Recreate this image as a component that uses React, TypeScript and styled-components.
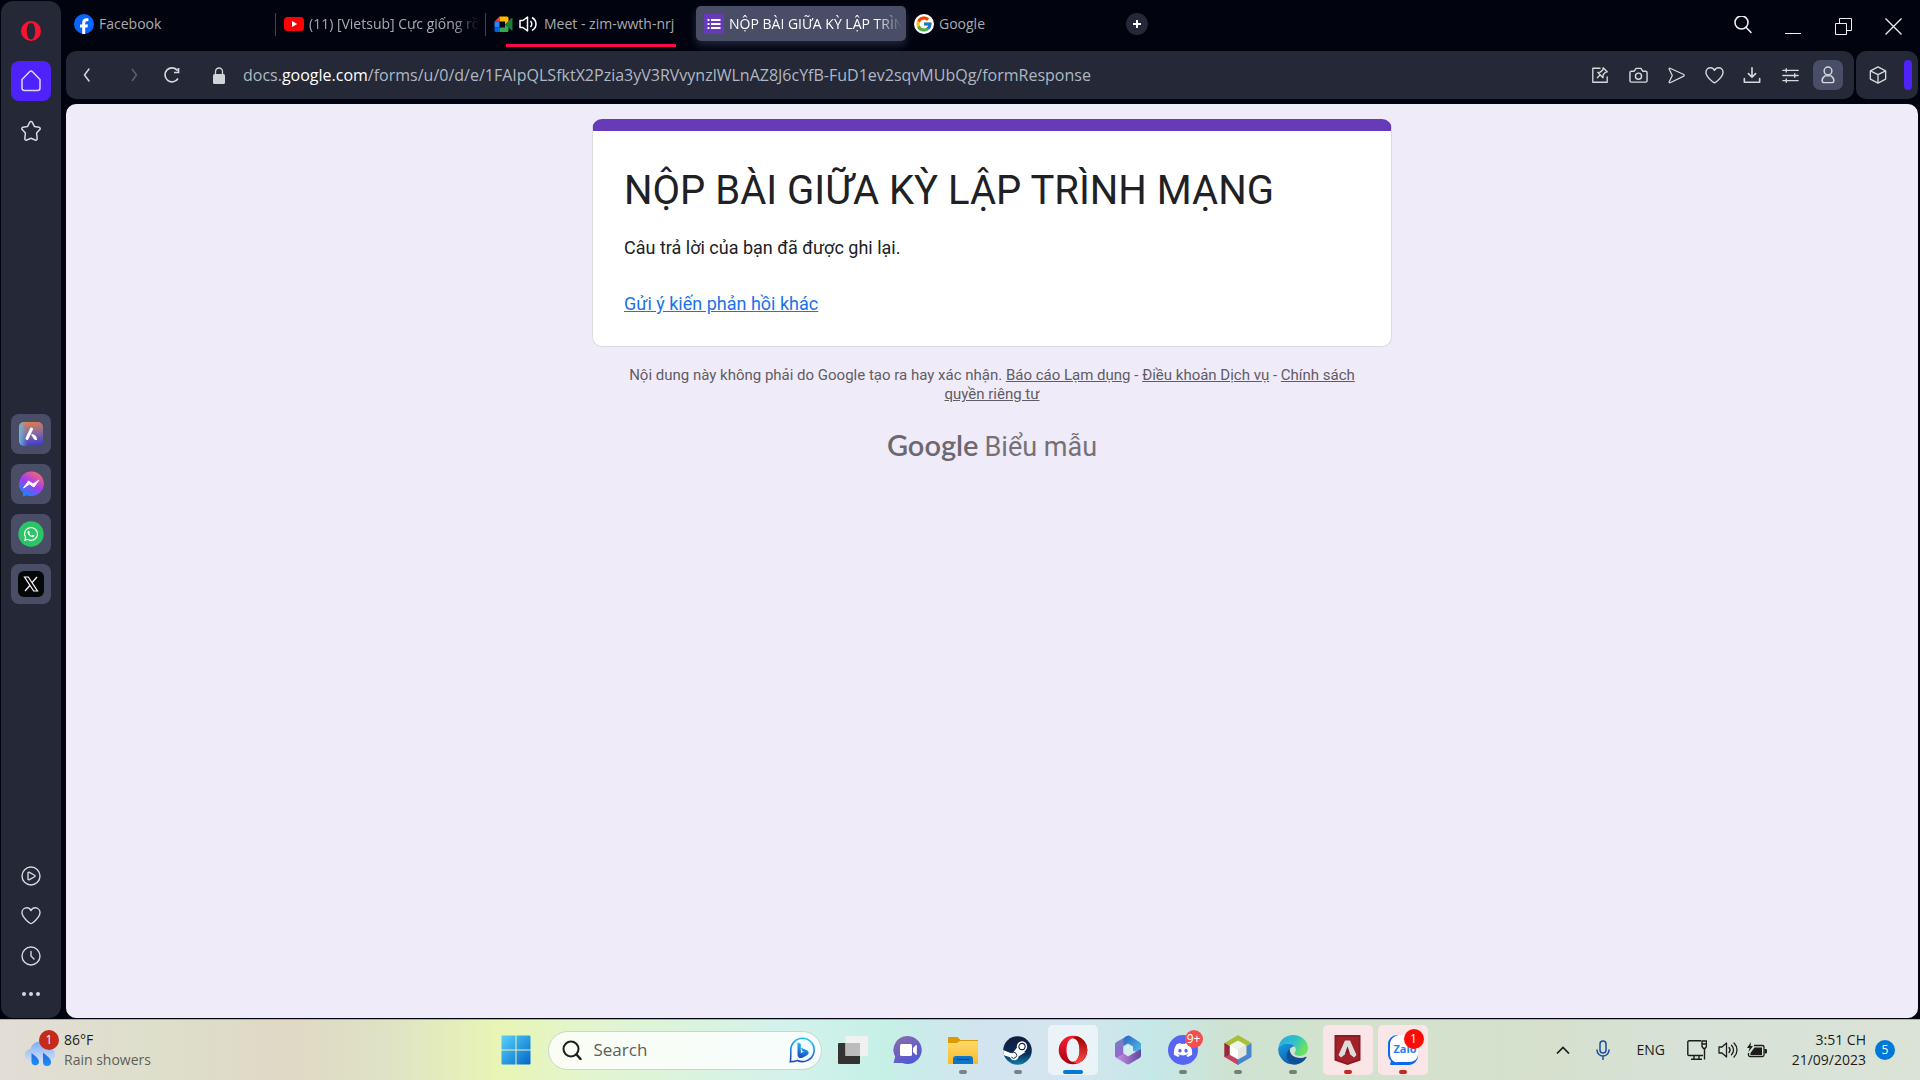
import React from "react";
import styled, { createGlobalStyle, css } from "styled-components";
import { FcGoogle } from "react-icons/fc";
import { FaDiscord, FaWhatsapp } from "react-icons/fa";

const Global = createGlobalStyle`
  *, *::before, *::after { box-sizing: border-box; }
  body { margin: 0; background: #01030f; font-family: "Open Sans", "Noto Sans", sans-serif; }
  button { font: inherit; color: inherit; border: 0; padding: 0; background: none; cursor: pointer; }
  svg { display: block; flex: none; }
`;

const Screen = styled.div`
  height: 100vh;
  display: grid;
  grid-template-rows: minmax(0, 1fr) 61px;
  background: #01030f;
`;

const Browser = styled.div`
  display: grid;
  grid-template-columns: 60px minmax(0, 1fr);
  gap: 5px;
  padding: 1px 2px 1px 1px;
  min-height: 0;
`;

const Sidebar = styled.nav`
  display: flex;
  flex-direction: column;
  align-items: center;
  background: #252836;
  border-radius: 12px;
  color: #d5d8e0;
  padding: 10px 0 2px;
`;

const SideButton = styled.button<{ $bg?: string }>`
  width: 40px;
  height: 40px;
  border-radius: 8px;
  background: ${(p) => p.$bg || "transparent"};
  display: grid;
  place-items: center;
`;

const SideGroup = styled.div<{ $gap: number }>`
  display: flex;
  flex-direction: column;
  gap: ${(p) => p.$gap}px;
`;

const Spacer = styled.div<{ $grow: number }>`
  flex: ${(p) => p.$grow} 1 0;
`;

const Main = styled.div`
  display: grid;
  grid-template-rows: 50px 48px minmax(0, 1fr);
  min-height: 0;
`;

const TopBar = styled.header`
  display: flex;
  justify-content: space-between;
  padding-top: 5px;
`;

const Tabs = styled.div`
  display: flex;
  align-items: flex-start;
`;

const Tab = styled.button<{ $active?: boolean; $line?: boolean }>`
  position: relative;
  width: 210px;
  height: 35px;
  display: flex;
  align-items: center;
  gap: 5px;
  padding: 0 8px;
  font-size: 14px;
  color: #a9abb0;
  border-radius: 5px;
  text-align: left;
  ${(p) =>
    p.$active &&
    css`
      background: #4a4d66;
      color: #fff;
      box-shadow: 0 4px 8px rgba(120, 124, 160, 0.3);
      padding-right: 5px;
    `}
  ${(p) =>
    p.$line &&
    css`
      &::before {
        content: "";
        position: absolute;
        left: -1px;
        top: 7px;
        width: 1px;
        height: 23px;
        background: #3f4357;
      }
    `}
`;

const TabLabel = styled.span<{ $fade?: boolean }>`
  flex: 1;
  min-width: 0;
  overflow: hidden;
  white-space: nowrap;
  ${(p) => p.$fade && "mask-image: linear-gradient(90deg, #000 85%, transparent 101%);"}
`;

const Playing = styled.span`
  position: absolute;
  left: 20px;
  right: 20px;
  bottom: -6px;
  height: 3px;
  background: #fa0a4c;
`;

const NewTab = styled.button`
  width: 22px;
  height: 22px;
  border-radius: 50%;
  background: #252836;
  display: grid;
  place-items: center;
  margin: 7px 10px;
`;

const WindowControls = styled.div`
  display: flex;
  align-items: flex-start;
  color: #eceef2;
`;

const WinButton = styled.button`
  width: 50px;
  height: 40px;
  display: grid;
  place-items: center;
`;

const AddressRow = styled.div`
  display: flex;
  gap: 2px;
`;

const Panel = styled.div<{ $grow?: boolean }>`
  display: flex;
  align-items: center;
  background: #252836;
  border-radius: 10px;
  color: #d5d8dd;
  min-width: 0;
  ${(p) =>
    p.$grow
      ? "flex: 1; padding: 0 11px 0 2px;"
      : "width: 62px; padding: 0 6px 0 7px; justify-content: space-between;"}
`;

const ToolButton = styled.button<{ $w?: number; $on?: boolean }>`
  flex: none;
  width: ${(p) => p.$w || 30}px;
  height: 30px;
  border-radius: 7px;
  display: grid;
  place-items: center;
  background: ${(p) => (p.$on ? "#4a4d66" : "transparent")};
`;

const Navigation = styled.div`
  display: flex;
  align-items: center;
  margin-right: 12px;
`;

const Url = styled.div`
  flex: 1;
  min-width: 0;
  overflow: hidden;
  white-space: nowrap;
  outline: 0;
  font-size: 16px;
  line-height: 24px;
  color: #aeb8c4;
  b { font-weight: 400; color: #fff; }
`;

const Tools = styled.div`
  display: flex;
  align-items: center;
  gap: 8px;
`;

const Accent = styled.span`
  width: 8px;
  height: 30px;
  border-radius: 4px;
  background: #4d22fb;
`;

const Page = styled.main`
  margin-top: 5px;
  background: #f0ebf8;
  border-radius: 10px;
  overflow: auto;
  padding-top: 15px;
  display: flex;
  flex-direction: column;
  align-items: center;
  font-family: Roboto, sans-serif;
`;

const Card = styled.section`
  width: 100%;
  max-width: 800px;
  background: #fff;
  border: 1px solid #dadce0;
  border-top: 12px solid #673ab7;
  border-radius: 10px;
  padding: 35px 31px 29px;
  color: #202124;
`;

const Title = styled.h1`
  margin: 0 0 18px;
  font-size: 40px;
  line-height: 50px;
  font-weight: 400;
`;

const Message = styled.p`
  margin: 0 0 29px;
  font-size: 18px;
  line-height: 27px;
`;

const Another = styled.a`
  display: block;
  font-size: 18px;
  line-height: 27px;
  color: #1a73e8;
  text-decoration: underline;
`;

const Legal = styled.p`
  width: 100%;
  max-width: 741px;
  margin: 19px 0 23px;
  font-size: 15px;
  line-height: 19px;
  text-align: center;
  color: #5f5c65;
  a { color: inherit; }
`;

const Brand = styled.a`
  display: flex;
  align-items: baseline;
  gap: 6px;
  font-size: 27px;
  line-height: 36px;
  color: #747179;
  text-decoration: none;
  b { font-family: Lato, sans-serif; font-size: 29px; font-weight: 600; color: #6b6870; }
`;

const Taskbar = styled.footer`
  display: grid;
  grid-template-columns: minmax(0, 1fr) auto minmax(0, 1fr);
  align-items: center;
  border-top: 1px solid #aab09f;
  color: #1c1d1b;
  background: linear-gradient(90deg, #e2ddd6 0%, #dedfcb 8%, #dfd9c6 15%, #dfe2c5 20%, #e8f5b5 26%, #e2f5d0 31%, #d3f2ec 41%, #c6f0e6 46%, #d2e4ef 51%, #d4e5ef 56%, #c5e8e8 60%, #cfe2d2 64%, #d3e2cc 71%, #d6e0cc 80%, #d7e2d8 88%, #dbe3d6 100%);
`;

const Weather = styled.button`
  display: flex;
  align-items: center;
  gap: 8px;
  padding-left: 24px;
  text-align: left;
  font-size: 14px;
  line-height: 20px;
  justify-self: start;
`;

const Muted = styled.span`
  display: block;
  color: #5c5f56;
`;

const Center = styled.div`
  display: flex;
  align-items: center;
  gap: 5px;
  margin-right: 2px;
`;

const Search = styled.label`
  width: 274px;
  height: 39px;
  display: flex;
  align-items: center;
  border: 1px solid #c9d6cb;
  border-radius: 20px;
  background: rgba(255, 255, 255, 0.8);
  padding: 0 6px 0 13px;
  margin: 0 1px 0 2px;
  input {
    flex: 1;
    min-width: 0;
    margin-left: 12px;
    border: 0;
    outline: 0;
    padding: 0;
    background: none;
    font: 17px/24px "Open Sans", sans-serif;
    color: #555;
  }
  input::placeholder { color: #5b5e59; opacity: 1; }
`;

const AppButton = styled.button<{ $bg?: string }>`
  position: relative;
  width: 50px;
  height: 50px;
  border-radius: 5px;
  display: grid;
  place-items: center;
  background: ${(p) => p.$bg || "transparent"};
`;

const Running = styled.span<{ $c: string; $w: number }>`
  position: absolute;
  left: 50%;
  bottom: 1px;
  width: ${(p) => p.$w}px;
  height: 4px;
  margin-left: ${(p) => -p.$w / 2}px;
  border-radius: 2px;
  background: ${(p) => p.$c};
`;

const Badge = styled.span<{ $c: string; $x: number; $y: number; $s: number }>`
  position: absolute;
  left: ${(p) => p.$x}px;
  top: ${(p) => p.$y}px;
  width: ${(p) => p.$s}px;
  height: ${(p) => p.$s}px;
  border-radius: 50%;
  background: ${(p) => p.$c};
  color: #fff;
  font-size: 12px;
  line-height: ${(p) => p.$s}px;
  text-align: center;
`;

const IconBox = styled.span`
  position: relative;
  display: block;
`;

const Tray = styled.div`
  justify-self: end;
  display: flex;
  align-items: center;
  padding-right: 25px;
  font-size: 14px;
  line-height: 20px;
`;

const TrayButton = styled.button<{ $w: number }>`
  width: ${(p) => p.$w}px;
  height: 40px;
  display: grid;
  place-items: center;
`;

const Clock = styled.button`
  text-align: right;
  margin: 0 9px 0 18px;
  line-height: 20px;
`;

const Count = styled.button`
  && {
    width: 20px;
    height: 20px;
    border-radius: 50%;
    background: #0078d7;
    color: #fff;
    font-size: 12px;
  }
`;

const Line = ({ s = 20, w = 1.5, children }: { s?: number; w?: number; children: React.ReactNode }) => (
  <svg width={s} height={s} viewBox="0 0 20 20" fill="none" stroke="currentColor" strokeWidth={w} strokeLinecap="round" strokeLinejoin="round">
    {children}
  </svg>
);

const HeartPath = <path d="M10 17.6C9 17.6 1 11.600 1 6.600 1 3.800 3.200 1.800 5.800 1.800 7.800 1.800 9.200 3 10 4.600 10.800 3 12.200 1.800 14.200 1.800c2.600 0 4.800 2 4.800 4.800 0 5-8 11-9 11z" />;

const FacebookIcon = () => (
  <svg width="20" height="20" viewBox="0 0 20 20">
    <circle cx="10" cy="10" r="10" fill="#0866ff" />
    <path fill="#fff" d="M8.2 20v-6.600H6v-3h2.200V9c0-3.200 1.500-4.700 4.600-4.700.6 0 1.200.1 1.600.2v2.800h-1.200c-1.500 0-2 .6-2 2.100v1H14l-.5 3h-2.300V20z" />
  </svg>
);

const YoutubeIcon = () => (
  <svg width="20" height="20" viewBox="0 0 20 20">
    <rect y="3" width="20" height="14" rx="3.5" fill="#f00" />
    <path d="M8 7v6l5.200-3z" fill="#fff" />
  </svg>
);

const MeetIcon = () => (
  <svg width="20" height="20" viewBox="0 0 20 20">
    <path d="M5.500 2.500v5H.5z" fill="#ea4335" />
    <path d="M.5 7.500h5v6h-5z" fill="#2684fc" />
    <path d="M.5 13.500h5v4.500h-3.500a1.500 1.500 0 0 1-1.500-1.500z" fill="#0066da" />
    <path d="M5.500 2.500h7.500a1.500 1.500 0 0 1 1.500 1.500v4l-3.500 2.500v-3h-5.500z" fill="#ffba00" />
    <path d="M11 10.500l3.500 2.500v3.500a1.500 1.500 0 0 1-1.500 1.500h-7.500v-4.500h5.500z" fill="#34a853" />
    <path d="M11 10.300l6.500-6c.6-.5 1-.3 1 .3v11.400c0 .6-.4.8-1 .3z" fill="#188038" />
  </svg>
);

const FormsIcon = () => (
  <svg width="20" height="20" viewBox="0 0 20 20">
    <rect width="20" height="20" rx="1" fill="#673ab7" />
    <path d="M3.500 5h2v2h-2zM7 5h9.500v2H7zM3.500 9h2v2h-2zM7 9h9.500v2H7zM3.500 13h2v2h-2zM7 13h9.500v2H7z" fill="#fff" />
  </svg>
);

const GoogleIcon = () => (
  <svg width="20" height="20" viewBox="0 0 20 20">
    <circle cx="10" cy="10" r="10" fill="#fff" />
    <FcGoogle x="1" y="1" size={18} />
  </svg>
);

const SpeakerIcon = () => (
  <svg width="20" height="18" viewBox="0 0 20 18" fill="none" stroke="#fff" strokeWidth="1.500" strokeLinejoin="round">
    <path d="M1 5.500h3l4.500-3.500v14L4 12.500H1z" />
    <path d="M11.500 6c1.700 1.700 1.700 4.300 0 6M13 2.500c5.300 3 5.300 10 0 13" />
  </svg>
);

const WindowsIcon = () => (
  <svg width="30" height="30" viewBox="0 0 30 30">
    <defs>
      <linearGradient id="win" x1="0" y1="0" x2="1" y2="1">
        <stop offset="0" stopColor="#5ad2fa" />
        <stop offset="1" stopColor="#0067c9" />
      </linearGradient>
    </defs>
    <path fill="url(#win)" d="M1.500 .5H14.500v14H.5v-13a1 1 0 0 1 1-1zM15.500 .5h13a1 1 0 0 1 1 1v13h-14zM.5 15.500h14v14h-13a1 1 0 0 1-1-1zM15.500 15.500h14v13a1 1 0 0 1-1 1h-13z" />
  </svg>
);

const BingIcon = () => (
  <svg width="26" height="26" viewBox="0 0 26 26">
    <defs>
      <linearGradient id="bing" x1=".6" y1="0" x2=".4" y2="1">
        <stop offset="0" stopColor="#1fc3ea" />
        <stop offset=".5" stopColor="#1e86e5" />
        <stop offset="1" stopColor="#1b49b4" />
      </linearGradient>
    </defs>
    <path d="M13.500 1.200a11.700 11.700 0 1 1-5 22.300c-2.300.7-4.500 1.200-7.200 1.300.6-2.800.5-5 .5-12A11.700 11.700 0 0 1 13.500 1.200z" fill="#f4fcff" stroke="url(#bing)" strokeWidth="1.600" />
    <path fill="url(#bing)" d="M8.500 5.500l3.300 1.200v9.600l3-1.700-1.700-.9-1.200-3 6.600 2.700c1.600 1.300 1.500 3.500 0 4.600l-5 2.800c-1.600.6-3.200.3-4.200-.9-.6-.8-.8-1.400-.8-2.400z" />
  </svg>
);

const TaskViewIcon = () => (
  <svg width="30" height="28" viewBox="0 0 30 28">
    <rect x="0" y="7" width="22" height="21" rx="1" fill="#333" />
    <rect x="7.500" y="0" width="22.500" height="20" rx="1" fill="#f1f1f1" />
    <path d="M7.500 7H22v13H7.500z" fill="#bcbcbc" />
  </svg>
);

const ChatIcon = () => (
  <svg width="30" height="30" viewBox="0 0 30 30">
    <defs>
      <linearGradient id="chat" x1="0" y1="0" x2=".6" y2="1">
        <stop offset="0" stopColor="#8d6da6" />
        <stop offset="1" stopColor="#5059d6" />
      </linearGradient>
    </defs>
    <path fill="url(#chat)" d="M15 1a14 14 0 1 1-5.500 27H1.500c-1-.2-1-1-.6-1.600l1.300-4.600A14 14 0 0 1 15 1z" />
    <rect x="7" y="9" width="12" height="12" rx="1.500" fill="#fff" />
    <path d="M20 13l3-3h.8v10H23l-3-3z" fill="#fff" />
  </svg>
);

const FolderIcon = () => (
  <svg width="30" height="27" viewBox="0 0 30 27">
    <defs>
      <linearGradient id="folder" x1="0" y1="0" x2="0" y2="1">
        <stop offset="0" stopColor="#ffdb6a" />
        <stop offset="1" stopColor="#fcb827" />
      </linearGradient>
    </defs>
    <path d="M1 0h8.500l3 3H30v8H0V1a1 1 0 0 1 1-1z" fill="#dd9a06" />
    <path d="M0 6h9l3-2h17a1 1 0 0 1 1 1v22H0z" fill="url(#folder)" />
    <path d="M5 27v-5a3 3 0 0 1 3-3h14a3 3 0 0 1 3 3v5z" fill="#0f75c8" />
    <path d="M8.500 22.500h13" stroke="#0b4d92" strokeWidth="1.200" />
  </svg>
);

const SteamIcon = () => (
  <svg width="29" height="29" viewBox="0 0 29 29">
    <defs>
      <linearGradient id="steam" x1="0" y1="0" x2="0" y2="1">
        <stop offset="0" stopColor="#121b3c" />
        <stop offset=".6" stopColor="#0c2c56" />
        <stop offset="1" stopColor="#0f7fae" />
      </linearGradient>
      <clipPath id="steamClip"><circle cx="14.500" cy="14.500" r="14.300" /></clipPath>
    </defs>
    <g clipPath="url(#steamClip)">
      <rect width="29" height="29" fill="url(#steam)" />
      <path d="M0 14l7.500 3 2.500-.5 4-5 8.500 4.500-7 4.500c-.3 5-7.500 5-8.400.8L0 19z" fill="#fff" />
      <circle cx="19" cy="10.500" r="5.200" fill="#fff" />
      <circle cx="19" cy="10.500" r="3.100" fill="#fff" stroke="#15254a" strokeWidth="1.100" />
      <path d="M8.400 21.200a3 3 0 1 0 .4-4.300" fill="none" stroke="#15254a" strokeWidth="1" />
    </g>
  </svg>
);

const OperaIcon = () => (
  <svg width="30" height="30" viewBox="0 0 30 30">
    <defs>
      <linearGradient id="op1" x1="0" y1="0" x2="0" y2="1">
        <stop offset="0" stopColor="#ff1b2d" />
        <stop offset="1" stopColor="#a70014" />
      </linearGradient>
      <linearGradient id="op2" x1="0" y1="0" x2="0" y2="1">
        <stop offset="0" stopColor="#9c0000" />
        <stop offset="1" stopColor="#ff4b4b" />
      </linearGradient>
    </defs>
    <path fillRule="evenodd" fill="url(#op1)" d="M15 .7a14.300 14.300 0 1 0 0 28.600 14.300 14.300 0 1 0 0-28.600zM15 3.200c3.900 0 6.500 5 6.500 11.800S18.900 26.800 15 26.800 8.500 21.800 8.500 15 11.100 3.200 15 3.200z" />
    <path fill="url(#op2)" d="M15 3.200c2-2 4-1.800 6-1.200a14.300 14.300 0 0 1 0 26c-2 .6-4 .8-6-1.200 3.900 0 6.500-5 6.500-11.800S18.900 3.200 15 3.200z" />
  </svg>
);

const OfficeIcon = () => (
  <svg width="28" height="30" viewBox="0 0 28 30">
    <defs>
      <linearGradient id="m1" x1="0" y1="0" x2="0" y2="1"><stop offset="0" stopColor="#6d86bd" /><stop offset="1" stopColor="#9a63d4" /></linearGradient>
      <linearGradient id="m2" x1="0" y1="0" x2="1" y2="1"><stop offset="0" stopColor="#2d62c8" /><stop offset="1" stopColor="#4fc3ea" /></linearGradient>
      <linearGradient id="m3" x1="0" y1="0" x2="1" y2="0"><stop offset="0" stopColor="#c98fe6" /><stop offset="1" stopColor="#63469e" /></linearGradient>
    </defs>
    <path d="M13 1L2.500 7A3 3 0 0 0 1 9.600v10.800A3 3 0 0 0 2.500 23L9.500 20V10.500L14 7z" fill="url(#m1)" />
    <path d="M13 1a3 3 0 0 1 3 0l9.500 6A3 3 0 0 1 27 9.600V19l-8-3.500v-4L14 8.500 9.500 11V5c0-1.500 1.500-3 3.500-4z" fill="url(#m2)" />
    <path d="M27 14v6.400a3 3 0 0 1-1.500 2.600L15.500 29a3 3 0 0 1-3 0L2.500 23l7-4.500 4.500 3 5-3z" fill="url(#m3)" />
    <path d="M14 9.500l5 2.800v5.400l-5 2.800-4.500-2.800v-5.400z" fill="#d5ebee" />
  </svg>
);

const DiscordIcon = () => (
  <svg width="30" height="30" viewBox="0 0 30 30">
    <circle cx="15" cy="15" r="15" fill="#5865f2" />
    <FaDiscord x="5" y="5" size={20} color="#fff" />
  </svg>
);

const NetbeansIcon = () => (
  <svg width="28" height="30" viewBox="0 0 28 30">
    <path d="M14 0l13.500 8-5 3.200L14 6 5.500 11.200 .5 8z" fill="#a8bf3a" />
    <path d="M.5 8l5 3.200v8.600L14 24.500V30L.5 22z" fill="#c8415f" />
    <path d="M.5 8l5 3.200v8.600L.5 22z" fill="#93283f" />
    <path d="M27.500 8v14L14 30v-5.500l8.500-4.700v-8.600z" fill="#4a86cf" />
    <path d="M14 5.500l8 4.600-8 4.600-8-4.600z" fill="#f1f4e4" />
    <path d="M6 10.100l8 4.600V24l-8-4.500z" fill="#fff" />
    <path d="M22 10.100l-8 4.600V24l8-4.500z" fill="#e3e8df" />
  </svg>
);

const EdgeIcon = () => (
  <svg width="30" height="30" viewBox="0 0 30 30">
    <defs>
      <linearGradient id="e1" x1="0" y1="0" x2="1" y2=".4"><stop offset="0" stopColor="#2aa7e2" /><stop offset=".6" stopColor="#2fc2c8" /><stop offset="1" stopColor="#6be35a" /></linearGradient>
      <linearGradient id="e2" x1="0" y1="0" x2=".6" y2="1"><stop offset="0" stopColor="#1aa0e6" /><stop offset="1" stopColor="#0c59a4" /></linearGradient>
    </defs>
    <path d="M.3 13C1.500 5 7.500 0 15 0c8.500 0 15 6 15 13 0 5-3.800 8-8.300 8-3.500 0-5.200-1.500-5.200-2.500 0-.9 1.300-1.500 1.300-4 0-3.300-3.300-6-7.800-6C5.500 8.500 2 10.500 .3 13z" fill="url(#e1)" />
    <path d="M.2 14C1 10.500 5 8.500 10 8.500c2.500 0 5.500 1 6.800 3-3.300-.3-5.800 2.500-5.800 6.500 0 5.500 4.500 10.500 9.500 10.500A15 15 0 0 1 .2 14z" fill="url(#e2)" />
    <path d="M12 14c-2.800 2-4 5-3 8.500 1.200 4.500 5 7.500 9.500 7 4.500-.7 8-3.500 10-7 .3-.7-.3-1-.8-.7-1.500.8-3.200 1.200-5.200 1.200-6.500 0-11.500-4-10.500-9z" fill="#0f4f98" />
  </svg>
);

const ApexIcon = () => (
  <svg width="27" height="30" viewBox="0 0 27 30">
    <path d="M.5 0h26v25.500L13.500 30 .5 25.500z" fill="#8c1a22" />
    <path d="M2.500 2h22v22l-11 4-11-4z" fill="#a3222a" />
    <path d="M11 5.500h5L22.500 20l-2.500 2.500-3.800-3-2.700-8-2.700 8-3.800 3L4.500 20z" fill="#dfdcdc" />
    <path d="M13.500 11.500l2 6.500h-4z" fill="#8c1a22" />
  </svg>
);

const ZaloLabel = styled.span`
  position: absolute;
  left: 6px;
  top: 7px;
  font: 700 11px/14px "Open Sans", sans-serif;
  color: #2a7df0;
`;

const ZaloIcon = () => (
  <IconBox>
    <svg width="30" height="30" viewBox="0 0 30 30">
      <path d="M9 0h12a9 9 0 0 1 9 9v12a9 9 0 0 1-9 9H3c-1 0-1.300-.5-.8-1.200L3 26C1 24 0 22 0 19V9a9 9 0 0 1 9-9z" fill="#0a68f0" />
      <path d="M11 0h10a9 9 0 0 1 9 9v10c0 5-4 8-9 8h-9c-2.500 0-4.500.8-6.500-.8C3 24.500 2 22 2 18V9.500C2 5 5 1 11 0z" fill="#fff" />
    </svg>
    <ZaloLabel>Zalo</ZaloLabel>
    <Badge $c="#fb0d06" $x={16} $y={-6} $s={20}>1</Badge>
  </IconBox>
);

const WeatherIcon = () => (
  <IconBox>
    <svg width="32" height="36" viewBox="0 0 32 36">
      <defs>
        <linearGradient id="cloud" x1="0" y1="0" x2="0" y2="1"><stop offset="0" stopColor="#7fb0f2" /><stop offset="1" stopColor="#cfdcf8" /></linearGradient>
        <linearGradient id="drop" x1="0" y1="0" x2="0" y2="1"><stop offset="0" stopColor="#2e63d6" /><stop offset="1" stopColor="#1593ff" /></linearGradient>
      </defs>
      <path d="M7 29a6 6 0 0 1-.5-12A9 9 0 0 1 24 16a6.500 6.500 0 0 1 1 13z" fill="url(#cloud)" />
      <path d="M7.500 21c3 2.500 7.500 5.500 7.500 8.500a3.700 3.700 0 0 1-7.500 0zM19 20.500c3.500 3 8 6 8 9.500a4 4 0 0 1-8 0z" fill="url(#drop)" />
    </svg>
    <Badge $c="#c42b1c" $x={15} $y={-2} $s={20}>1</Badge>
  </IconBox>
);

const AriaIcon = () => (
  <svg width="24" height="24" viewBox="0 0 24 24">
    <defs>
      <linearGradient id="ar" x1=".5" y1="0" x2=".6" y2="1"><stop offset="0" stopColor="#de7a4e" /><stop offset=".45" stopColor="#8a6c9e" /><stop offset="1" stopColor="#3f3ad0" /></linearGradient>
      <linearGradient id="ar2" x1="0" y1="0" x2="1" y2="0"><stop offset="0" stopColor="#6cb6d8" /><stop offset=".35" stopColor="#5fb2d8" stopOpacity="0" /></linearGradient>
    </defs>
    <rect width="24" height="24" rx="5" fill="url(#ar)" />
    <rect width="24" height="24" rx="5" fill="url(#ar2)" />
    <path d="M12.500 7L8 16.500" stroke="#fff" strokeWidth="3" strokeLinecap="round" />
    <path d="M12 12.500c3-.8 6 1.500 6 5.500-3.500.5-4-3-6-5.500z" fill="#fff" />
  </svg>
);

const MessengerIcon = () => (
  <svg width="26" height="26" viewBox="0 0 26 26">
    <defs>
      <linearGradient id="ms" x1=".8" y1="0" x2=".2" y2="1"><stop offset="0" stopColor="#ff6a68" /><stop offset=".5" stopColor="#a43bf2" /><stop offset="1" stopColor="#0a8cff" /></linearGradient>
    </defs>
    <path d="M13 .5a12.300 12.300 0 1 1-4 23.700L5 25.500v-3.800A12.300 12.300 0 0 1 13 .5z" fill="url(#ms)" />
    <path d="M5.500 17l5-7 4.500 3 6-4-5 7-4.500-3z" fill="#fff" stroke="#fff" strokeLinejoin="round" />
  </svg>
);

const WhatsappIcon = () => (
  <svg width="26" height="26" viewBox="0 0 26 26">
    <circle cx="13" cy="13" r="12.700" fill="#2bc466" />
    <FaWhatsapp x="5" y="5" size={16} color="#fff" />
  </svg>
);

const XIcon = () => (
  <svg width="26" height="26" viewBox="0 0 26 26" fill="none" stroke="#fff">
    <rect width="26" height="26" rx="6" fill="#050708" stroke="none" />
    <path d="M6.500 6h3.800l9.200 14h-3.800zM19 6l-5.300 6M12.300 14L7 20" strokeWidth="1.200" />
  </svg>
);

const apps: { name: string; icon: React.ReactNode; bg?: string; dot?: string; w?: number }[] = [
  { name: "Task view", icon: <TaskViewIcon /> },
  { name: "Chat", icon: <ChatIcon /> },
  { name: "File Explorer", icon: <FolderIcon />, dot: "#7a8287" },
  { name: "Steam", icon: <SteamIcon />, dot: "#7a8287" },
  { name: "Opera", icon: <OperaIcon />, dot: "#0078d7", w: 20, bg: "rgba(255,255,255,.55)" },
  { name: "Microsoft 365", icon: <OfficeIcon /> },
  { name: "Discord", icon: <IconBox><DiscordIcon /><Badge $c="#f2504e" $x={17} $y={-5} $s={18}>9+</Badge></IconBox>, dot: "#757f76" },
  { name: "NetBeans", icon: <NetbeansIcon />, dot: "#757f76" },
  { name: "Edge", icon: <EdgeIcon />, dot: "#757f76" },
  { name: "Apex Legends", icon: <ApexIcon />, dot: "#c42b1c", bg: "#fbe6e7" },
  { name: "Zalo", icon: <ZaloIcon />, dot: "#c42b1c", bg: "#fbe6e7" },
];

export default function App() {
  return (
    <>
      <Global />
      <Screen>
        <Browser>
          <Sidebar aria-label="Sidebar">
            <SideGroup $gap={10}>
              <SideButton aria-label="Opera menu">
                <svg width="20" height="20" viewBox="0 0 20 20">
                  <path fillRule="evenodd" fill="#fb1230" d="M10 0a10 10 0 1 0 0 20 10 10 0 1 0 0-20zM10 1.700c2.800 0 4.200 3.700 4.200 8.300s-1.400 8.300-4.200 8.300S5.800 14.600 5.800 10 7.200 1.700 10 1.700z" />
                </svg>
              </SideButton>
              <SideButton aria-label="Home" $bg="#4d22fb">
                <svg width="22" height="22" viewBox="0 0 22 22" fill="none" stroke="#dcd6ff" strokeWidth="1.500" strokeLinejoin="round">
                  <path d="M2 9.500L9.500 1.700a2 2 0 0 1 3 0L20 9.500V18a2.500 2.500 0 0 1-2.500 2.500h-13A2.500 2.500 0 0 1 2 18z" />
                </svg>
              </SideButton>
              <SideButton aria-label="Bookmarks">
                <svg width="22" height="22" viewBox="0 0 22 22" fill="none" stroke="currentColor" strokeWidth="1.500" strokeLinejoin="round">
                  <path d="M9.800 2.200c.5-1 1.900-1 2.400 0l2.200 4.200 4.600.8c1.200.2 1.600 1.600.8 2.400l-3.200 3.500.6 5.500c.1 1.200-1 1.900-2 1.400L11 18.200 6.800 20c-1 .5-2.100-.2-2-1.400l.6-5.500L2.200 9.600c-.8-.8-.4-2.200.8-2.400l4.600-.8z" />
                </svg>
              </SideButton>
            </SideGroup>
            <Spacer $grow={262} />
            <SideGroup $gap={10}>
              <SideButton aria-label="Aria" $bg="#4a4d66"><AriaIcon /></SideButton>
              <SideButton aria-label="Messenger" $bg="#4a4d66"><MessengerIcon /></SideButton>
              <SideButton aria-label="WhatsApp" $bg="#4a4d66"><WhatsappIcon /></SideButton>
              <SideButton aria-label="X" $bg="#4a4d66"><XIcon /></SideButton>
            </SideGroup>
            <Spacer $grow={251} />
            <SideGroup $gap={0}>
              <SideButton aria-label="Player"><Line w={1.4}><circle cx="10" cy="10" r="9" /><path d="M7 6.700v6.600l1 .5L14 10.500v-1L8 6.200z" /></Line></SideButton>
              <SideButton aria-label="Pinboards"><Line w={1.4}>{HeartPath}</Line></SideButton>
              <SideButton aria-label="History"><Line w={1.4}><circle cx="10" cy="10" r="9" /><path d="M10 5.500V10l3 3" /></Line></SideButton>
              <SideButton aria-label="More"><svg width="20" height="20" viewBox="0 0 20 20" fill="#d5d8e0"><circle cx="3" cy="8" r="2" /><circle cx="10" cy="8" r="2" /><circle cx="17" cy="8" r="2" /></svg></SideButton>
            </SideGroup>
          </Sidebar>
          <Main>
            <TopBar>
              <Tabs>
                <Tab><FacebookIcon /><TabLabel>Facebook</TabLabel></Tab>
                <Tab $line><YoutubeIcon /><TabLabel $fade>(11) [Vietsub] Cực giống rồi</TabLabel></Tab>
                <Tab $line><MeetIcon /><SpeakerIcon /><TabLabel>Meet - zim-wwth-nrj</TabLabel><Playing /></Tab>
                <Tab $active><FormsIcon /><TabLabel $fade>NỘP BÀI GIỮA KỲ LẬP TRÌNH</TabLabel></Tab>
                <Tab><GoogleIcon /><TabLabel>Google</TabLabel></Tab>
                <NewTab aria-label="New tab"><svg width="10" height="10" viewBox="0 0 10 10"><path d="M5 1v8M1 5h8" stroke="#fff" strokeWidth="2" /></svg></NewTab>
              </Tabs>
              <WindowControls>
                <WinButton aria-label="Search tabs"><Line w={1.6}><circle cx="8.500" cy="6.500" r="6.500" /><path d="M13 11.200L18 16.500" /></Line></WinButton>
                <WinButton aria-label="Minimize"><svg width="16" height="16"><path d="M0 15.500h16" stroke="currentColor" /></svg></WinButton>
                <WinButton aria-label="Restore"><svg width="17" height="17" fill="none" stroke="currentColor"><path d="M.5 5.500h11v11H.5zM4.500 5V.5h12v12H12" /></svg></WinButton>
                <WinButton aria-label="Close"><svg width="17" height="17" fill="none" stroke="currentColor" strokeWidth="1.300"><path d="M.5 .5l16 16M16.500 .5l-16 16" /></svg></WinButton>
              </WindowControls>
            </TopBar>
            <AddressRow>
              <Panel $grow>
                <Navigation>
                  <ToolButton $w={38} aria-label="Back"><Line><path d="M12 4L7.500 10l4.500 6" /></Line></ToolButton>
                  <ToolButton $w={56} aria-label="Forward" disabled><svg width="20" height="20" viewBox="0 0 20 20" fill="none" stroke="#5c5f6c" strokeWidth="1.500"><path d="M8 4l4.500 6L8 16" /></svg></ToolButton>
                  <ToolButton $w={20} aria-label="Reload"><svg width="18" height="18" viewBox="0 0 18 18" fill="none" stroke="currentColor" strokeWidth="1.700"><path d="M15 12.500A7 7 0 1 1 14.500 4.500M15.500 2v4.500H11" /></svg></ToolButton>
                </Navigation>
                <ToolButton $w={49} aria-label="Site information"><svg width="14" height="17" viewBox="0 0 14 17"><rect x="1" y="7" width="12" height="10" rx="1.500" fill="#d0d4d8" /><path d="M3.500 8V4.500a3.500 3.500 0 0 1 7 0V8" fill="none" stroke="#d0d4d8" strokeWidth="1.300" /></svg></ToolButton>
                <Url role="textbox" aria-label="Address" contentEditable suppressContentEditableWarning spellCheck={false}>docs.<b>google.com</b>/forms/u/0/d/e/1FAIpQLSfktX2Pzia3yV3RVvynzlWLnAZ8J6cYfB-FuD1ev2sqvMUbQg/formResponse</Url>
                <Tools>
                  <ToolButton aria-label="Edit page"><Line s={18}><path d="M10 2.500H2v15.500h16V12" /><path d="M7 13l3-3M13.500 2L18 6.500l-2 .5-2.500 2.700-.2 3.300L7.500 7l2.800-.2L13 4.500z" /></Line></ToolButton>
                  <ToolButton aria-label="Snapshot"><Line s={19}><path d="M2.500 5.500h3L7.500 2.500h5l2 3h3a1.500 1.500 0 0 1 1.500 1.500v8.500A1.500 1.500 0 0 1 17.500 17h-15A1.500 1.500 0 0 1 1 15.500V7a1.500 1.500 0 0 1 1.500-1.500z" /><circle cx="10" cy="10.700" r="3.200" /></Line></ToolButton>
                  <ToolButton aria-label="Send to My Flow"><Line s={17}><path d="M2.500 1.500L18 8.500c1.500.8 1.500 1.800 0 2.500L2.500 18.500c-1 .4-1.500-.4-1-1.200L5 10 1.500 2.700c-.5-.8 0-1.600 1-1.200z" /></Line></ToolButton>
                  <ToolButton aria-label="Add to Pinboards"><Line s={19}>{HeartPath}</Line></ToolButton>
                  <ToolButton aria-label="Downloads"><Line s={18} w={1.8}><path d="M10 2v10M6 8.500l4 4 4-4M1.500 14v4h17v-4" /></Line></ToolButton>
                  <ToolButton aria-label="Easy setup"><Line s={17} w={1.6}><path d="M1 4h18M1 10h18M1 16h18M5 2v4M15 8v4M5 14v4" /></Line></ToolButton>
                  <ToolButton aria-label="Profile" $on><Line s={18} w={1.6}><circle cx="10" cy="5.500" r="4.300" /><path d="M6.500 11h7c2 1.500 3 3.500 3 5 0 1.800-1 2.500-2.500 2.500H6c-1.500 0-2.500-.7-2.500-2.500 0-1.500 1-3.500 3-5z" /></Line></ToolButton>
                </Tools>
              </Panel>
              <Panel>
                <ToolButton aria-label="Extensions"><Line s={18}><path d="M10 1l8.500 4.500v9L10 19l-8.500-4.500v-9zM1.500 5.500L10 9.500l8.500-4M10 9.500V19" /></Line></ToolButton>
                <Accent />
              </Panel>
            </AddressRow>
            <Page>
              <Card>
                <Title>NỘP BÀI GIỮA KỲ LẬP TRÌNH MẠNG</Title>
                <Message>Câu trả lời của bạn đã được ghi lại.</Message>
                <Another href="#">Gửi ý kiến phản hồi khác</Another>
              </Card>
              <Legal>
                Nội dung này không phải do Google tạo ra hay xác nhận. <a href="#">Báo cáo Lạm dụng</a> - <a href="#">Điều khoản Dịch vụ</a> - <a href="#">Chính sách quyền riêng tư</a>
              </Legal>
              <Brand href="#"><b>Google</b><span>Biểu mẫu</span></Brand>
            </Page>
          </Main>
        </Browser>
        <Taskbar>
          <Weather>
            <WeatherIcon />
            <span>86°F<Muted>Rain showers</Muted></span>
          </Weather>
          <Center>
            <AppButton aria-label="Start"><WindowsIcon /></AppButton>
            <Search>
              <svg width="20" height="20" viewBox="0 0 20 20" fill="none" stroke="#1d1f1e" strokeWidth="2" strokeLinecap="round"><circle cx="9" cy="9" r="7.500" /><path d="M14.500 14.500L18.500 19" strokeWidth="2.500" /></svg>
              <input type="text" placeholder="Search" aria-label="Search" />
              <BingIcon />
            </Search>
            {apps.map((a) => (
              <AppButton key={a.name} aria-label={a.name} $bg={a.bg}>
                {a.icon}
                {a.dot && <Running $c={a.dot} $w={a.w || 8} />}
              </AppButton>
            ))}
          </Center>
          <Tray>
            <TrayButton $w={40} aria-label="Hidden icons"><svg width="14" height="8" fill="none" stroke="currentColor" strokeWidth="1.700"><path d="M1 7.500l6-6 6 6" /></svg></TrayButton>
            <TrayButton $w={40} aria-label="Microphone"><svg width="14" height="20" viewBox="0 0 14 20" fill="none" stroke="#1b4fa3" strokeWidth="1.500" strokeLinecap="round"><rect x="4" y="1" width="6" height="12" rx="3" /><path d="M1 10a6 6 0 0 0 12 0M7 16v3.500" /></svg></TrayButton>
            <TrayButton $w={56}>ENG</TrayButton>
            <TrayButton $w={37} aria-label="Network"><svg width="20" height="20" viewBox="0 0 20 20" fill="none" stroke="currentColor" strokeWidth="1.400"><path d="M14 .8H2A1.200 1.200 0 0 0 .8 2v12A1.200 1.200 0 0 0 2 15.500h14M4 19.300h11M7 15.500v4M12 15.500v4M15 1h4.500v5.500L18 8.500h-1.500L15 6.500zM15 4h4.500M17.500 8.500v11" /></svg></TrayButton>
            <TrayButton $w={25} aria-label="Volume"><svg width="20" height="18" viewBox="0 0 20 18" fill="none" stroke="currentColor" strokeWidth="1.300" strokeLinejoin="round" strokeLinecap="round"><path d="M1 6h3l4.500-4v14L4 12H1zM11 6.500c1.300 1.500 1.300 3.500 0 5M13.500 4.300c2.700 2.700 2.700 6.700 0 9.400M16 2c4 4 4 10 0 14" /></svg></TrayButton>
            <TrayButton $w={33} aria-label="Battery"><svg width="20" height="16" viewBox="0 0 20 16"><path d="M7 3.500h8.500a1.500 1.500 0 0 1 1.500 1.500v8a1.500 1.500 0 0 1-1.500 1.500H3A1.500 1.500 0 0 1 1.500 13v-2" fill="none" stroke="currentColor" strokeWidth="1.300" /><path d="M7.500 5.500H15V13H3.500v-2zM17.500 7H19a1 1 0 0 1 1 1v2.500a1 1 0 0 1-1 1h-1.500zM4 0L0 6h2.500L1.500 10 6 4H3.500z" fill="currentColor" /></svg></TrayButton>
            <Clock>3:51 CH<br />21/09/2023</Clock>
            <Count aria-label="5 notifications">5</Count>
          </Tray>
        </Taskbar>
      </Screen>
    </>
  );
}
